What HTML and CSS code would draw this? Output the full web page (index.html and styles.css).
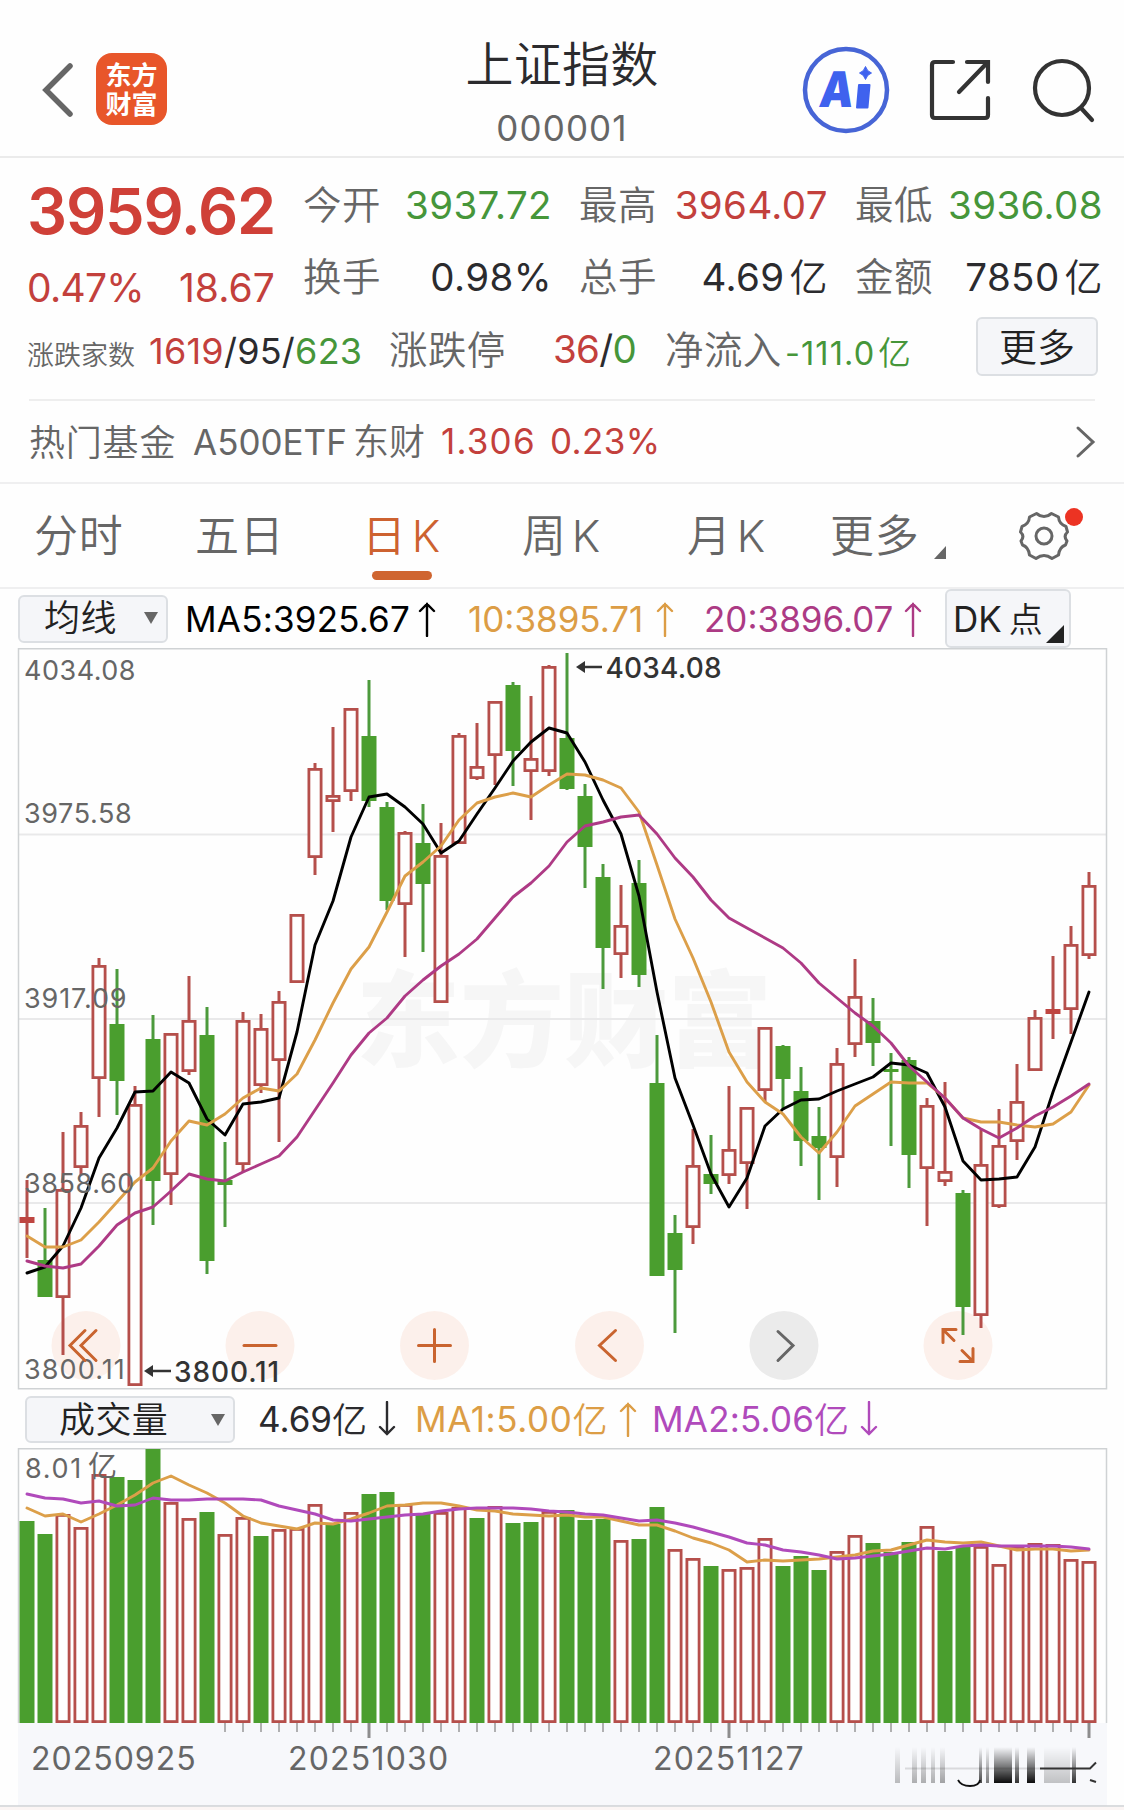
FILE: index.html
```html
<!DOCTYPE html>
<html lang="zh-CN">
<head>
<meta charset="utf-8">
<title>上证指数 000001</title>
<link rel="stylesheet" href="styles.css">
</head>
<body>
<header class="topbar">
  <div class="topbar-left">
    <svg class="back" width="32" height="56" viewBox="0 0 32 56"><path d="M28 4 4 28l24 24"/></svg>
    <div class="logo"><span>东方</span><span>财富</span></div>
  </div>
  <div class="title">
    <h1>上证指数</h1>
    <p>000001</p>
  </div>
  <div class="topbar-right">
    <svg class="ai" width="88" height="88" viewBox="0 0 88 88">
      <circle cx="44" cy="44" r="41"/>
      <text transform="translate(16 60.500) skewX(-7)" x="0" y="0" textLength="34" lengthAdjust="spacingAndGlyphs">A</text>
      <path d="M57 39h10.500l-2 22.500H55z"/>
      <path class="spark" d="M63.500 20.500q1.500 5 6 6.500-4.500 1.500-6 6.500-1.500-5-6-6.500 4.500-1.500 6-6.500z"/>
    </svg>
    <svg class="line-icon share" width="64" height="64" viewBox="0 0 64 64"><path d="M25 4H7Q4 4 4 7v50q0 3 3 3h50q3 0 3-3V40M39 4h21v20M59 5 31 34"/></svg>
    <svg class="line-icon" width="66" height="66" viewBox="0 0 66 66"><circle cx="31" cy="31" r="27"/><path d="m50 51 11 12"/></svg>
  </div>
</header>

<section class="quote">
  <div class="quote-main">
    <div class="price-col">
      <div class="price">3959.62</div>
      <div class="change"><span>0.47%</span><span class="diff">18.67</span></div>
    </div>
    <div class="stats">
      <div class="stat"><label>今开</label><span class="down">3937.72</span></div>
      <div class="stat"><label>最高</label><span class="up">3964.07</span></div>
      <div class="stat"><label>最低</label><span class="down">3936.08</span></div>
      <div class="stat"><label>换手</label><span>0.98%</span></div>
      <div class="stat"><label>总手</label><span>4.69<i>亿</i></span></div>
      <div class="stat"><label>金额</label><span>7850<i>亿</i></span></div>
    </div>
  </div>
  <div class="breadth">
    <label class="small">涨跌家数</label>
    <span class="count"><b class="up">1619</b>/95/<b class="down">623</b></span>
    <label>涨跌停</label>
    <span class="limit"><b class="up">36</b>/<b class="down">0</b></span>
    <label>净流入</label>
    <span class="flow down">-111.0<i>亿</i></span>
    <button class="more">更多</button>
  </div>
  <div class="fund">
    <span class="fund-label">热门基金</span>
    <span class="fund-name">A500ETF<i>东财</i></span>
    <span class="fund-price up">1.306</span>
    <span class="fund-pct up">0.23%</span>
    <svg class="go" width="22" height="34" viewBox="0 0 22 34"><path d="m3 3 15 14L3 31"/></svg>
  </div>
</section>

<nav class="tabs">
  <a>分时</a>
  <a>五日</a>
  <a class="active">日<i>K</i></a>
  <a>周<i>K</i></a>
  <a>月<i>K</i></a>
  <a class="tab-more">更多</a>
  <span class="settings">
    <svg width="50" height="50" viewBox="-25 -25 50 50">
      <path d="M-7.500 -22.500Q-4 -19.500 0 -19.500T7.500 -22.500L14.500 -19Q15 -12 22 -9.500L23.500 -4Q19 0 23 5L21.500 9Q15.500 11 14.500 19L8 22.500Q4 19.500 0 19.500T-8 22.500L-14.500 19Q-15.500 11 -21.500 9L-23 5Q-19 0 -23.500 -4L-22 -9.500Q-15 -12 -14.500 -19Z"/>
      <circle r="8"/>
    </svg>
    <span class="dot"></span>
  </span>
</nav>

<section class="ma-bar">
  <button class="select ma-select">均线<span class="caret"></span></button>
  <span class="ma5">MA5:3925.67<svg class="arrow" width="18" height="36" viewBox="0 0 18 36"><path d="M9 35V3M2 10l7-7 7 7"/></svg></span>
  <span class="ma10">10:3895.71<svg class="arrow" width="18" height="36" viewBox="0 0 18 36"><path d="M9 35V3M2 10l7-7 7 7"/></svg></span>
  <span class="ma20">20:3896.07<svg class="arrow" width="18" height="36" viewBox="0 0 18 36"><path d="M9 35V3M2 10l7-7 7 7"/></svg></span>
  <button class="dk">DK<i>点</i></button>
</section>

<svg id="price-chart" class="chart" width="1124" height="742" viewBox="0 648 1124 742"></svg>

<section class="vol-bar">
  <button class="select vol-select">成交量<span class="caret"></span></button>
  <span class="vol">4.69<i>亿</i><svg class="arrow" width="18" height="36" viewBox="0 0 18 36"><path d="M9 1v32M2 26l7 7 7-7"/></svg></span>
  <span class="vma1">MA1:5.00<i>亿</i><svg class="arrow" width="18" height="36" viewBox="0 0 18 36"><path d="M9 35V3M2 10l7-7 7 7"/></svg></span>
  <span class="vma2">MA2:5.06<i>亿</i><svg class="arrow" width="18" height="36" viewBox="0 0 18 36"><path d="M9 1v32M2 26l7 7 7-7"/></svg></span>
</section>

<svg id="volume-chart" class="chart" width="1124" height="362" viewBox="0 1448 1124 362"></svg>

<script src="chart.js"></script>
</body>
</html>
```
FILE: styles.css
```css
* { box-sizing: border-box; }

body {
  margin: 0;
  width: 1124px;
  height: 1810px;
  overflow: hidden;
  background: #fefefe;
  color: #2b2b2e;
  font-family: Inter, "Noto Sans CJK SC", sans-serif;
  font-weight: 400;
}

h1, p { margin: 0; font-weight: 350; }
i { font-style: normal; font-weight: 350; }
b { font-weight: inherit; }
label { color: #666; font-weight: 350; }
button {
  font: inherit;
  font-weight: 350;
  color: #222;
  background: #f5f6f9;
  border: 2px solid #dcdfe3;
  border-radius: 6px;
  padding: 0;
}
.up { color: #c3403c; }
.down { color: #46963a; }

/* top bar */
.topbar {
  display: grid;
  grid-template-columns: 1fr auto 1fr;
  height: 158px;
  border-bottom: 2px solid #ebebeb;
}
.topbar-left { display: flex; align-items: flex-start; padding-left: 42px; }
.back { margin-top: 62px; fill: none; stroke: #666; stroke-width: 5.500; stroke-linecap: round; }
.logo {
  width: 71px;
  height: 72px;
  margin: 53px 0 0 22px;
  padding-top: 8px;
  border-radius: 16px;
  background: #e8562a;
  color: #fff;
  text-align: center;
  font-size: 26px;
  font-weight: 700;
  line-height: 29px;
}
.logo span { display: block; }
.title { padding-top: 35px; text-align: center; }
.title h1 { font-size: 48px; line-height: 60px; letter-spacing: .3px; }
.title p { margin-top: 8px; color: #666; font-size: 35px; line-height: 50px; letter-spacing: 1.1px; font-weight: 400; }
.topbar-right { display: flex; align-items: flex-start; justify-content: flex-end; padding-right: 27px; }
.ai { margin-top: 46px; fill: #3f62ee; }
.ai circle { fill: none; stroke: #4765d6; stroke-width: 4.500; }
.ai path { stroke: #3f62ee; stroke-width: 2; stroke-linejoin: round; }
.ai .spark { stroke-width: 1; }
.ai text { font-size: 49px; font-weight: 900; }
.line-icon { fill: none; stroke: #333; stroke-width: 4.200; stroke-linecap: round; }
.share { margin: 58px 39px 0 38px; }
.line-icon:last-child { margin-top: 57px; }

/* quote */
.quote { height: 326px; border-bottom: 2px solid #efeff0; }
.quote-main { display: flex; height: 159px; padding: 11px 20px 0 27px; }
.price-col { width: 276px; color: #cf4038; }
.price { padding-top: 4px; font-size: 63px; font-weight: 600; line-height: 76px; letter-spacing: -1.200px; }
.change {
  display: flex;
  justify-content: space-between;
  width: 248px;
  margin-top: 9px;
  font-size: 39px;
  line-height: 60px;
  letter-spacing: -.7px;
  color: #c3403c;
}
.diff { letter-spacing: .1px; }
.stats {
  display: grid;
  grid-template-columns: 249px 249px 248px;
  grid-auto-rows: 72px;
  column-gap: 27px;
}
.stat { display: flex; justify-content: space-between; font-size: 38.500px; line-height: 72px; letter-spacing: .4px; white-space: nowrap; }
.stat i { margin-left: 5px; font-size: 38px; }
.breadth {
  display: grid;
  grid-template-columns: 122px 240px 164px 112px 120px 191px 122px;
  height: 82px;
  padding: 2px 25px 22px 27px;
  align-items: center;
  white-space: nowrap;
  font-size: 38.500px;
}
.breadth label { margin-top: -3px; letter-spacing: .4px; }
.breadth .small { font-size: 27px; margin-top: 10px; letter-spacing: 0; }
.count { font-size: 36px; padding-top: 5px; letter-spacing: .25px; }
.limit { padding-top: 2px; letter-spacing: -.7px; }
.flow { font-size: 32.500px; padding-top: 5px; letter-spacing: 1.1px; }
.flow i { margin-left: 3px; }
.more { height: 59px; margin-top: -3px; font-size: 38px; line-height: 54px; }
.fund {
  display: flex;
  align-items: center;
  height: 84px;
  margin: 0 29px;
  border-top: 2px solid #eee;
  color: #666;
  font-size: 35px;
}
.fund-label { width: 164px; margin-top: -4px; font-size: 36px; letter-spacing: .8px; font-weight: 350; }
.fund-name { width: 248px; margin-top: -6px; }
.fund-name i { margin-left: 6px; font-size: 36px; }
.fund-price { width: 109px; margin-top: -2px; letter-spacing: 1.200px; }
.fund-pct { margin-top: -2px; letter-spacing: .4px; }
.go { margin-left: auto; margin-right: -2px; fill: none; stroke: #666; stroke-width: 3; stroke-linecap: round; }

/* tabs */
.tabs {
  display: grid;
  grid-template-columns: 160px 168px 160px 164px 144px 190px 60px;
  height: 105px;
  padding-left: 34px;
  border-bottom: 2px solid #efeff0;
  color: #666;
  font-size: 44px;
  font-weight: 350;
  line-height: 105px;
  letter-spacing: .8px;
}
.tabs i { margin-left: 5px; font-size: 44px; }
.active { color: #cd6230; }
.active::after {
  content: "";
  display: block;
  width: 60px;
  height: 9px;
  margin: -18px 0 0 10px;
  border-radius: 5px;
  background: #cf6530;
}
.tab-more::after {
  content: "";
  display: inline-block;
  margin-left: 14px;
  border-left: 12px solid transparent;
  border-bottom: 13px solid #666;
  vertical-align: -7px;
}
.tabs a:nth-child(2), .tabs a:nth-child(5) { padding-left: 1px; }
.settings { position: relative; display: flex; align-items: center; }
.settings svg { margin: -1px 0 0 -1px; fill: none; stroke: #666; stroke-width: 3; stroke-linejoin: round; }
.dot {
  position: absolute;
  left: 45px;
  top: 24px;
  width: 18px;
  height: 18px;
  border-radius: 50%;
  background: #ec3323;
}

/* indicator rows */
.ma-bar, .vol-bar { display: flex; align-items: center; font-size: 35px; white-space: nowrap; }
.ma-bar { height: 59px; padding-left: 18px; }
.ma-bar > span, .vol-bar > span { display: flex; align-items: center; }
.arrow { margin-left: 8px; fill: none; stroke: currentColor; stroke-width: 2.400; stroke-linecap: round; }
.select {
  display: flex;
  align-items: center;
  justify-content: space-between;
  height: 48px;
  font-size: 36px;
  line-height: 44px;
}
.caret { border: 7px solid transparent; border-top: 12px solid #666; border-bottom: 0; }
.ma-select { width: 150px; padding: 0 8px 1px 24px; letter-spacing: .5px; }
.ma5 { width: 282px; margin-left: 17px; color: #000; letter-spacing: .2px; }
.ma10 { width: 238px; padding-left: 1px; color: #dc9d45; }
.ma20 { width: 241px; margin-left: -1px; color: #ac3a84; }
.ma10 .arrow { margin-left: 13px; }
.ma20 .arrow { margin-left: 11px; }
.dk {
  display: flex;
  align-items: center;
  width: 126px;
  height: 59px;
  padding-left: 6px;
  font-size: 35px;
  font-weight: 400;
}
.dk i { margin: -3px 0 0 7px; font-size: 34px; }
.dk::after {
  content: "";
  align-self: flex-end;
  margin: 0 0 3px 3px;
  border-left: 18px solid transparent;
  border-bottom: 18px solid #222;
}
.vol-bar { height: 58px; padding-left: 25px; }
.vol-bar i { margin-top: -4px; }
.vol-select { width: 210px; height: 47px; margin-top: 1px; padding: 0 8px 0 32px; letter-spacing: .4px; }
.vol { width: 158px; margin-left: 23px; }
.vma1 { width: 237px; margin-left: -1px; color: #dc9d45; letter-spacing: .6px; }
.vma2 { color: #b04abb; letter-spacing: .2px; }
.vol .arrow, .vma1 .arrow, .vma2 .arrow { margin-left: 11px; }

/* charts */
.chart { display: block; }
.frame { fill: none; stroke: #cfd2d4; stroke-width: 1.500; }
.grid { stroke: #e9e9ea; stroke-width: 2; }
.watermark { fill: #f6f6f6; font-size: 104px; font-weight: 900; }
.rise { stroke: #b54f4b; fill: none; stroke-width: 3; }
.rise-body { stroke: #b54f4b; fill: #fefefe; stroke-width: 2.800; }
.rise-flat { fill: #bf4541; }
.fall { stroke: #4c9a3c; stroke-width: 3; }
.fall-body { fill: #4a9e2e; }
.ma { fill: none; stroke-width: 2.900; stroke-linejoin: round; stroke-linecap: round; }
.black { stroke: #000; }
.orange { stroke: #dc9f49; }
.purple { stroke: #ae3a85; }
.violet { stroke: #b04abb; }
.axis-text { fill: #666; font-size: 27px; }
.mark-text { fill: #333; font-size: 28px; font-weight: 500; }
.mark-line { stroke: #333; stroke-width: 2.500; }
.mark-head { fill: #333; }
.ctl { fill: rgba(228, 104, 48, .09); }
.ctl-off { fill: #ebebeb; }
.ctl-icon { fill: none; stroke: #c9642f; stroke-width: 3; stroke-linecap: round; }
.ctl-icon-off { stroke: #666; }
.axis-bg { fill: #f7f8fb; }
.bottom-line { stroke: #cfd2d4; stroke-width: 1.500; }
.bottom-bg { fill: #fbf5f4; }
.tick { stroke: #999; stroke-width: 1.500; }
.tick-major { stroke: #8d8d8d; stroke-width: 3; }
.date-text { fill: #666; font-size: 32px; }
```
FILE: chart.js
```js
// Daily candles as [kind, high, bodyTop, bodyBottom, low]; r = rise, g = fall.
const candles = [
  ['r',1180,1217,1223,1258],['g',1208,1260,1297,1297],['r',1132,1189,1298,1355],['r',1112,1125,1168,1175],
  ['r',958,965,1079,1117],['g',969,1024,1081,1115],['r',1086,1104,1386,1386],['g',1015,1039,1181,1225],
  ['r',1033,1033,1175,1205],['r',976,1020,1072,1075],['g',1007,1035,1261,1274],['g',1142,1180,1185,1227],
  ['r',1012,1020,1165,1172],['r',1014,1028,1086,1093],['r',991,1001,1061,1142],['r',914,914,983,983],
  ['r',763,768,858,875],['r',727,795,802,832],['r',708,708,792,801],['g',680,736,801,807],
  ['g',802,807,901,910],['r',831,832,905,957],['g',804,843,884,952],['r',823,855,1003,1003],
  ['r',733,735,844,844],['r',723,766,779,780],['r',701,701,756,785],['g',682,685,751,786],
  ['r',696,758,772,820],['r',665,666,772,776],['g',653,738,789,790],['g',784,796,847,888],
  ['g',864,877,948,989],['r',885,925,955,978],['g',860,883,975,987],['g',1035,1083,1276,1276],
  ['g',1215,1233,1270,1333],['r',1129,1165,1228,1244],['g',1135,1174,1184,1194],['r',1086,1149,1176,1184],
  ['r',1107,1107,1164,1209],['r',1027,1027,1091,1102],['g',1045,1046,1079,1110],['g',1067,1091,1141,1166],
  ['g',1107,1136,1148,1200],['r',1048,1063,1158,1187],['r',959,996,1045,1057],['g',998,1021,1043,1066],
  ['g',1053,1069,1072,1146],['g',1057,1060,1155,1188],['r',1098,1105,1169,1226],['r',1082,1171,1182,1186],
  ['g',1190,1193,1307,1335],['r',1130,1164,1316,1328],['r',1109,1145,1207,1208],['r',1064,1101,1142,1160],
  ['r',1010,1017,1071,1071],['r',956,1009,1014,1039],['r',926,944,1010,1034],['r',872,885,956,959]
];
const ma5 = [1273,1267,1246,1208,1158,1128,1092,1091,1072,1083,1119,1135,1104,1102,1098,1032,945,901,837,797,794,807,824,853,841,814,788,761,742,728,733,762,800,834,896,992,1078,1125,1174,1207,1178,1126,1109,1100,1099,1091,1084,1077,1063,1065,1073,1107,1161,1180,1179,1177,1147,1092,1042,992];
const ma10 = [1236,1247,1247,1240,1222,1202,1182,1168,1141,1121,1125,1114,1098,1088,1091,1074,1040,1003,969,947,912,876,862,846,820,803,797,793,797,785,774,775,780,788,812,865,919,958,1002,1052,1082,1102,1114,1137,1153,1132,1106,1094,1082,1083,1083,1098,1118,1122,1122,1125,1127,1124,1112,1085];
const ma20 = [1261,1266,1268,1264,1246,1225,1213,1207,1191,1174,1179,1181,1172,1164,1156,1137,1110,1083,1055,1033,1018,996,980,966,954,939,918,897,883,866,842,826,822,817,815,834,858,877,900,918,928,938,948,963,983,998,1013,1026,1043,1066,1082,1098,1118,1129,1138,1128,1116,1107,1096,1084];
const volume = [1521,1534,1515,1528,1475,1477,1480,1449,1503,1519,1512,1535,1518,1536,1530,1529,1505,1524,1513,1494,1492,1505,1513,1513,1508,1518,1507,1523,1522,1512,1510,1520,1519,1541,1539,1507,1550,1559,1566,1570,1568,1539,1566,1556,1570,1552,1536,1543,1552,1542,1527,1551,1547,1547,1565,1547,1544,1545,1560,1562];
const volFall = [0,1,5,6,7,10,13,17,19,20,22,25,27,28,30,31,32,34,35,38,42,43,44,47,48,49,51,52];
const vma1 = [1508,1516,1514,1522,1514,1505,1495,1483,1476,1485,1493,1503,1516,1523,1526,1529,1523,1524,1519,1513,1506,1505,1503,1503,1506,1510,1511,1514,1515,1516,1515,1517,1517,1521,1525,1525,1531,1538,1543,1550,1562,1560,1561,1560,1559,1557,1555,1551,1550,1545,1540,1542,1543,1542,1546,1550,1549,1549,1551,1550];
const vma2 = [1494,1498,1499,1503,1501,1506,1505,1498,1500,1500,1499,1499,1499,1500,1506,1510,1514,1520,1521,1519,1517,1515,1514,1511,1509,1508,1508,1508,1509,1511,1512,1514,1515,1518,1521,1520,1523,1527,1532,1537,1543,1545,1550,1552,1555,1559,1558,1556,1554,1551,1548,1549,1546,1545,1546,1546,1546,1546,1547,1549];

const x = i => 27 + 18 * i;
const line = (cls, x1, y1, x2, y2) => `<line class="${cls}" x1="${x1}" y1="${y1}" x2="${x2}" y2="${y2}"/>`;
const rect = (cls, l, t, w, h) => `<rect class="${cls}" x="${l}" y="${t}" width="${w}" height="${h}"/>`;
const text = (cls, l, y, s, spacing) => `<text class="${cls}" x="${l}" y="${y}" letter-spacing="${spacing}">${s}</text>`;
const curve = (cls, ys) => `<polyline class="ma ${cls}" points="${ys.map((y, i) => x(i) + ',' + y).join(' ')}"/>`;
const hollow = (cx, t, b) => rect('rise-body', cx - 6.1, t + 1.4, 12.2, b - t - 2.8);

function candle([kind, high, top, bottom, low], i) {
  const cx = x(i);
  if (kind === 'g') return line('fall', cx, high, cx, low) + rect('fall-body', cx - 7.500, top, 15, bottom - top);
  const wick = line('rise', cx, high, cx, top) + line('rise', cx, bottom, cx, low);
  return bottom - top < 7 ? wick + rect('rise-flat', cx - 7.500, top, 15, bottom - top) : wick + hollow(cx, top, bottom);
}

const controls = [
  [86, 'M-1-15-16 0-1 15M10-15-5 0 10 15'],
  [260, 'M-16 0H16'],
  [434.5, 'M-16 0H16M0-16V16'],
  [609.5, 'M6-15-10 0 6 15'],
  [784, 'M-6-14 9 0-6 15'],
  [958, 'M-15-3V-16H-2M-15-16-4-5M15 3V16H2M15 16 4 5']
].map(([cx, d], i) => {
  const off = i === 4 ? ['ctl-off', 'ctl-icon-off'] : ['ctl', ''];
  return [`<circle class="${off[0]}" cx="${cx}" cy="1345.5" r="34.5"/>`,
    `<path class="ctl-icon ${off[1]}" transform="translate(${cx} 1345.5)" d="${d}"/>`];
});

document.getElementById('price-chart').innerHTML =
  '<text class="watermark" x="356" y="1059">东方财富</text>' +
  [834.5, 1019, 1203].map(y => line('grid', 19, y, 1106, y)).join('') +
  rect('frame', 18.5, 648.75, 1088, 740) +
  controls.map(c => c[0]).join('') +
  candles.map(candle).join('') +
  curve('black', ma5) + curve('orange', ma10) + curve('purple', ma20) +
  text('axis-text', 24, 680, '4034.08', .5) + text('axis-text', 24, 823, '3975.58', .6) +
  text('axis-text', 24, 1008, '3917.09', .9) + text('axis-text', 24, 1192.500, '3858.60', .6) +
  text('axis-text', 24, 1378.500, '3800.11', 1.1) +
  controls.map(c => c[1]).join('') +
  line('mark-line', 583, 667, 602, 667) + '<path class="mark-head" d="M576 667l9-6v12z"/>' +
  text('mark-text', 605.500, 677.500, '4034.08', .2) +
  line('mark-line', 152, 1371, 171, 1371) + '<path class="mark-head" d="M144 1371l9-6v12z"/>' +
  text('mark-text', 174, 1382, '3800.11', .9);

let ticks = '';
for (let i = 11; i < 60; i++) {
  const major = i % 20 === 19;
  ticks += line(major ? 'tick-major' : 'tick', x(i), 1723, x(i), major ? 1738 : 1732);
}

// Partly faded latest-date label: [left, width, opacity]
const faded = [[895,5,.25],[912,5,.3],[921,5,.3],[931,4,.3],[940,5,.35],[979,3,.7],[986,3,.5],[994,18,.95],[1015,4,.8],[1027,8,.95],[1044,26,.22],[1072,4,.8]];

document.getElementById('volume-chart').innerHTML =
  '<defs><linearGradient id="fade" x1="0" y1="0" x2="0" y2="1"><stop offset="0" stop-opacity="0"/><stop offset="1"/></linearGradient></defs>' +
  rect('axis-bg', 18, 1723, 1089, 83) +
  '<path class="frame" d="M18.500 1723V1448.750H1106.500V1723"/>' +
  volume.map((t, i) => volFall.includes(i)
    ? rect('fall-body', x(i) - 7.500, t, 15, 1723 - t)
    : hollow(x(i), t - 1, 1723)).join('') +
  curve('orange', vma1) + curve('violet', vma2) +
  text('axis-text', 25, 1477.500, '8.01<tspan dx="5" dy="-1" font-size="29">亿</tspan>', 1.7) + ticks +
  text('date-text', 31, 1770, '20250925', 1) + text('date-text', 288, 1770, '20251030', 1.2) +
  text('date-text', 653, 1770, '20251127', 1.2) +
  faded.map(([l, w, o]) => `<rect x="${l}" y="1747" width="${w}" height="36" fill="url(#fade)" opacity="${o}"/>`).join('') +
  '<path d="M958 1780q3 6 12 6t10-6" fill="none" stroke="#111" stroke-width="1.800"/>' +
  '<path d="M1040 1768.500h50l6-6M1090 1780l6 2" fill="none" stroke="#333" stroke-width="2"/>' +
  '<path d="M905 1768.500h135" stroke="#000" stroke-opacity=".12" stroke-width="2"/>' +
  line('bottom-line', 0, 1806, 1124, 1806) + rect('bottom-bg', 0, 1807, 1124, 3);
```
